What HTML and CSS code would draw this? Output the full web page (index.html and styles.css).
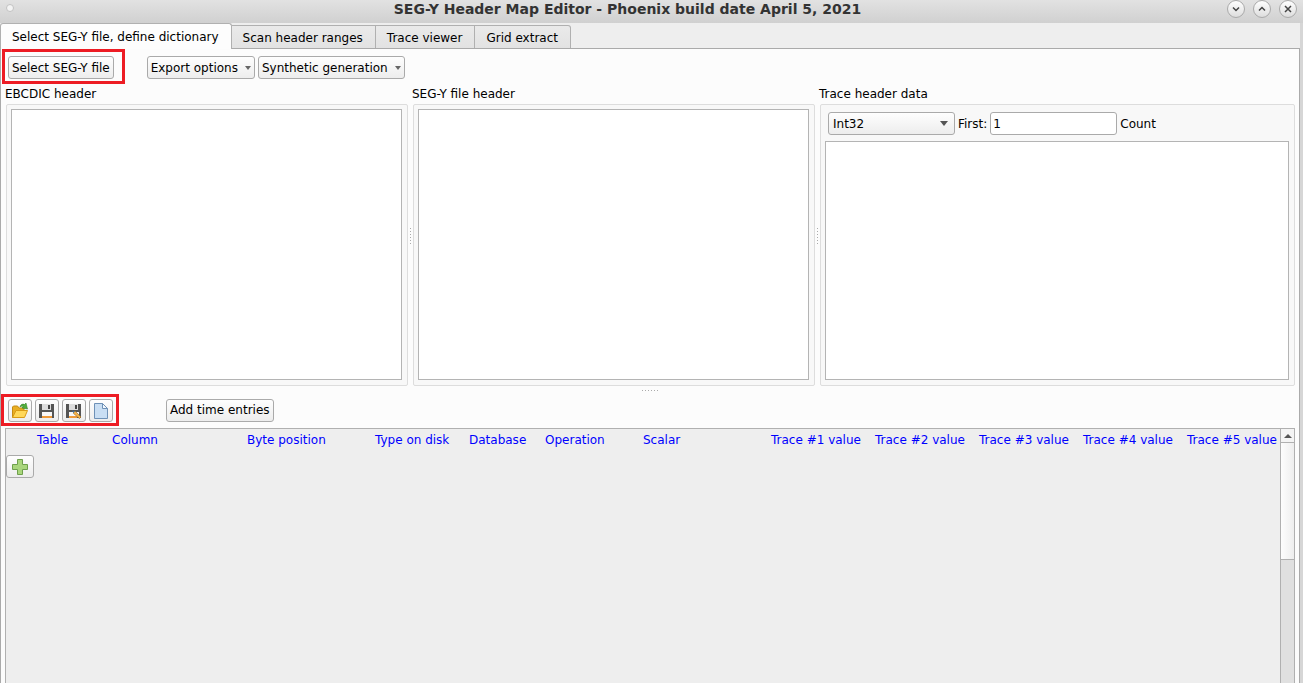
FILE: index.html
```
<!DOCTYPE html>
<html lang="en">
<head>
<meta charset="utf-8">
<title>SEG-Y Header Map Editor</title>
<link rel="stylesheet" href="styles.css">
</head>
<body>
<header class="titlebar">
  <span class="window-dot"></span>
  <h1 class="window-title">SEG-Y Header Map Editor - Phoenix build date April 5, 2021</h1>
  <div class="window-controls">
    <button class="window-button" aria-label="Minimize"><svg width="18" height="18" viewBox="0 0 18 18"><path d="M6 7.5l3 3 3-3"/></svg></button>
    <button class="window-button" aria-label="Maximize"><svg width="18" height="18" viewBox="0 0 18 18"><path d="M6 10.500l3-3 3 3"/></svg></button>
    <button class="window-button" aria-label="Close"><svg width="18" height="18" viewBox="0 0 18 18"><path d="M6 6l6 6M12 6l-6 6"/></svg></button>
  </div>
</header>
<div class="window">
  <nav class="tabs" role="tablist">
    <button class="tab tab-active" role="tab" aria-selected="true">Select SEG-Y file, define dictionary</button>
    <button class="tab" role="tab">Scan header ranges</button>
    <button class="tab" role="tab">Trace viewer</button>
    <button class="tab" role="tab">Grid extract</button>
  </nav>
  <main class="page">
    <div class="toolbar toolbar-top">
      <div class="highlight highlight-file"><button class="btn">Select SEG-Y file</button></div>
      <div class="menus">
        <button class="btn btn-menu">Export options<svg width="6" height="4" viewBox="0 0 6 4"><path d="M0 0h6L3 4z"/></svg></button>
        <button class="btn btn-menu">Synthetic generation<svg width="6" height="4" viewBox="0 0 6 4"><path d="M0 0h6L3 4z"/></svg></button>
      </div>
    </div>
    <div class="panels">
      <section class="panel">
        <label class="panel-label" for="ebcdic">EBCDIC header</label>
        <div class="frame"><textarea id="ebcdic" class="viewer"></textarea></div>
      </section>
      <svg class="grip" width="4" height="16" viewBox="0 0 4 16"><path d="M2.500 0v16"/></svg>
      <section class="panel">
        <label class="panel-label" for="segy">SEG-Y file header</label>
        <div class="frame"><textarea id="segy" class="viewer"></textarea></div>
      </section>
      <svg class="grip" width="4" height="16" viewBox="0 0 4 16"><path d="M2.500 0v16"/></svg>
      <section class="panel">
        <label class="panel-label" for="trace">Trace header data</label>
        <div class="frame">
          <div class="fields">
            <div class="select-wrap">
              <select class="field" aria-label="Data type"><option>Int32</option></select>
              <svg class="select-arrow" width="8" height="5" viewBox="0 0 8 5"><path d="M0 0h8L4 5z"/></svg>
            </div>
            <label for="first">First:</label>
            <input id="first" class="field field-text" type="text" value="1">
            <span>Count</span>
          </div>
          <textarea id="trace" class="viewer"></textarea>
        </div>
      </section>
    </div>
    <svg class="grip-row" width="16" height="8" viewBox="0 0 16 8"><path d="M0 4.500h16"/></svg>
    <div class="toolbar toolbar-map">
      <div class="highlight highlight-icons">
        <button class="btn btn-icon" aria-label="Open"><svg width="18" height="18" viewBox="0 0 18 18">
          <path d="M1.500 15.500V5l1-1h4l1.500 2H13v3" fill="#e8ae22" stroke="#c58a12"/>
          <path d="M1.500 15.500L5 8.500H16.500L13.500 15.500z" fill="#ffd85a" stroke="#d99b16"/>
          <path d="M9 5C9.500 2.500 11.500 1.500 13.500 2.500L15 1l1.500 6-5.500-1 1.200-1.500C11 4 10 4 9 5z" fill="#51ae3c" stroke="#348329" stroke-width=".6"/></svg></button>
        <button class="btn btn-icon" aria-label="Save"><svg width="18" height="18" viewBox="0 0 18 18">
          <path d="M1 2h15v14H1z" fill="#555"/><path d="M4 2h9v6H4z" fill="#ddd"/><path d="M10 3h2v4h-2z" fill="#444"/><path d="M4 10h10v5H4z" fill="#f8f8f8"/><path d="M4 14h10v2H4z" fill="#ee9a3a"/></svg></button>
        <button class="btn btn-icon" aria-label="Save as"><svg width="18" height="18" viewBox="0 0 18 18">
          <path d="M1 2h15v14H1z" fill="#555"/><path d="M4 2h9v6H4z" fill="#ddd"/><path d="M10 3h2v4h-2z" fill="#444"/><path d="M4 10h10v5H4z" fill="#f8f8f8"/><path d="M4 14h8v2H4z" fill="#ee9a3a"/>
          <path d="M8.500 9.500l1.500-.5 6 6-1.500 1.500-6-5z" fill="#f3b44c" stroke="#9d681e" stroke-width=".6"/><path d="M7 8.500l3 .8-1.500 1.700z" fill="#3c71a5"/></svg></button>
        <button class="btn btn-icon" aria-label="New"><svg width="18" height="18" viewBox="0 0 18 18">
          <path d="M2.500 1.500h8l5 5v10h-13z" fill="#c9def3" stroke="#6e91b7"/><path d="M10.500 1.500v5h5z" fill="#f2f8fe" stroke="#6e91b7"/></svg></button>
      </div>
      <button class="btn">Add time entries</button>
    </div>
    <div class="map">
      <div class="map-body">
        <table class="map-table">
          <colgroup><col class="c31"><col class="c75"><col class="c135"><col class="c128"><col class="c94"><col class="c76"><col class="c98"><col class="c128"><col class="c104"><col class="c104"><col class="c104"><col class="c104"><col></colgroup>
          <thead><tr><td></td><th>Table</th><th>Column</th><th>Byte position</th><th>Type on disk</th><th>Database</th><th>Operation</th><th>Scalar</th><th>Trace #1 value</th><th>Trace #2 value</th><th>Trace #3 value</th><th>Trace #4 value</th><th>Trace #5 value</th></tr></thead>
          <tbody><tr><td><button class="btn btn-add" aria-label="Add row"><svg width="18" height="18" viewBox="0 0 18 18"><path d="M6.500 1.500h5v5h5v5h-5v5h-5v-5h-5v-5h5z" fill="#a9d67c" stroke="#6fa04c"/></svg></button></td><td colspan="12"></td></tr></tbody>
        </table>
      </div>
      <div class="scrollbar">
        <button class="scroll-up" aria-label="Scroll up"><svg width="8" height="4" viewBox="0 0 8 4"><path d="M0 4h8L4 0z"/></svg></button>
        <div class="scroll-thumb"></div>
      </div>
    </div>
  </main>
</div>
</body>
</html>
```
FILE: styles.css
```
* { box-sizing: border-box; }
body {
  margin: 0;
  height: 100vh;
  display: flex;
  flex-direction: column;
  overflow: hidden;
  background: #d6d6d6;
  color: #000;
  font: 12px/16px "DejaVu Sans", sans-serif;
}
button, input, select, textarea { font: inherit; color: inherit; margin: 0; }
svg { display: block; flex: none; }

.titlebar {
  flex: none;
  height: 23px;
  display: flex;
  align-items: flex-start;
  background: linear-gradient(#e2e2e2, #d0d0d0);
}
.window-dot {
  flex: none;
  width: 8px;
  height: 8px;
  margin: 4px 0 0 6px;
  border: 1px solid #c2c2c2;
  border-radius: 50%;
  background: #f4f4f4;
}
.window-title {
  flex: 1;
  margin: 0;
  padding-left: 14px;
  color: #333;
  font-size: 14px;
  line-height: 18px;
  text-align: center;
  white-space: nowrap;
}
.window-controls { display: flex; gap: 8px; padding-right: 6px; }
.window-button {
  flex: none;
  width: 18px;
  height: 18px;
  padding: 0;
  border: 1px solid #aaa;
  border-radius: 50%;
  background: linear-gradient(#fff, #ddd);
}
.window-button svg { margin: -1px; fill: none; stroke: #444; stroke-width: 1.5; }

.window {
  flex: 1;
  min-height: 0;
  display: flex;
  flex-direction: column;
  margin-right: 3px;
  background: #eee;
}
.tabs { flex: none; display: flex; align-items: flex-end; height: 26px; }
.tab {
  height: 24px;
  padding: 1px 12px 0 11px;
  border: 1px solid #b0b0b0;
  border-left: 0;
  background: linear-gradient(#eaeaea, #e2e2e2);
  white-space: nowrap;
}
.tab:last-child { border-top-right-radius: 3px; }
.tab-active {
  height: 26px;
  padding-top: 0;
  border-left: 1px solid #b0b0b0;
  border-bottom: 0;
  border-radius: 3px 3px 0 0;
  background: #fdfdfd;
  z-index: 1;
}
.page {
  flex: 1;
  min-height: 0;
  display: flex;
  flex-direction: column;
  margin-top: -1px;
  padding: 0 4px;
  border: 1px solid #aaa;
  border-bottom: 0;
  background: #fcfcfc;
}
.toolbar { flex: none; display: flex; align-items: center; }
.toolbar-top { gap: 22px; margin-left: -3px; }
.menus { display: flex; gap: 3px; padding-top: 2px; }
.highlight { display: flex; border: 3px solid #ed1c24; }
.highlight-file { padding: 4px 8px 2px 3px; }
.highlight-icons { gap: 3px; padding: 2px 3px 1px 4px; }
.btn {
  display: flex;
  align-items: center;
  justify-content: center;
  height: 23px;
  padding: 0 3px;
  border: 1px solid #aaa;
  border-radius: 3px;
  background: linear-gradient(#fefefe, #ededed);
  white-space: nowrap;
}
.btn-menu { gap: 7px; }
.btn-menu svg { fill: #666; }
.btn-icon { width: 24px; padding: 0; }
.btn-add { width: 28px; padding: 0; }

.panels {
  flex: none;
  display: grid;
  grid-template-columns: 403fr auto 403fr auto 476fr;
  align-items: stretch;
  padding-top: 2px;
}
.panel { display: flex; flex-direction: column; min-width: 0; }
.panel-label { height: 18px; }
.frame {
  display: flex;
  flex-direction: column;
  height: 282px;
  margin-left: 1px;
  padding: 4px 5px 5px 4px;
  border: 1px solid #ddd;
  border-radius: 2px;
  background: #f8f8f8;
}
.viewer {
  flex: 1;
  width: 100%;
  padding: 4px;
  border: 1px solid #b4b4b4;
  background: #fff;
  resize: none;
  outline: 0;
}
.fields { display: flex; align-items: center; gap: 3px; padding: 3px 3px 6px; }
.select-wrap { position: relative; width: 127px; }
.field {
  display: block;
  width: 127px;
  height: 23px;
  padding: 0 4px;
  border: 1px solid #aaa;
  border-radius: 3px;
  background: linear-gradient(#fefefe, #ededed);
  appearance: none;
}
.field-text { padding: 0 2px; background: #fff; }
.select-arrow { position: absolute; right: 7px; top: 9px; fill: #555; pointer-events: none; }
.grip { align-self: center; }
.grip-row { align-self: center; }
.grip, .grip-row { fill: none; stroke: #aaa; stroke-dasharray: 1 2; }

.toolbar-map { gap: 47px; margin-left: -4px; }
.map {
  flex: 1;
  min-height: 0;
  display: flex;
  margin-top: 2px;
  border: 1px solid #b0b0b0;
  border-bottom: 0;
  background: #eee;
}
.map-body { flex: 1; min-width: 0; overflow: hidden; }
.map-table { width: 100%; table-layout: fixed; border-collapse: collapse; }
.map-table thead tr { height: 26px; }
.map-table th, .map-table td { padding: 0; }
.map-table th {
  padding-bottom: 4px;
  color: #00f;
  font-weight: normal;
  text-align: left;
  white-space: nowrap;
}
.c31 { width: 31px; }
.c75 { width: 75px; }
.c76 { width: 76px; }
.c94 { width: 94px; }
.c98 { width: 98px; }
.c104 { width: 104px; }
.c128 { width: 128px; }
.c135 { width: 135px; }
.scrollbar {
  flex: none;
  display: flex;
  flex-direction: column;
  width: 14px;
  border-left: 1px solid #b0b0b0;
  background: #e0e0e0;
}
.scroll-up {
  display: flex;
  align-items: center;
  justify-content: center;
  height: 14px;
  padding: 0;
  border: 0;
  border-bottom: 1px solid #b0b0b0;
  background: #f4f4f4;
}
.scroll-up svg { fill: #555; }
.scroll-thumb {
  height: 117px;
  border-bottom: 1px solid #b0b0b0;
  background: linear-gradient(90deg, #fdfdfd, #eee);
}
```
